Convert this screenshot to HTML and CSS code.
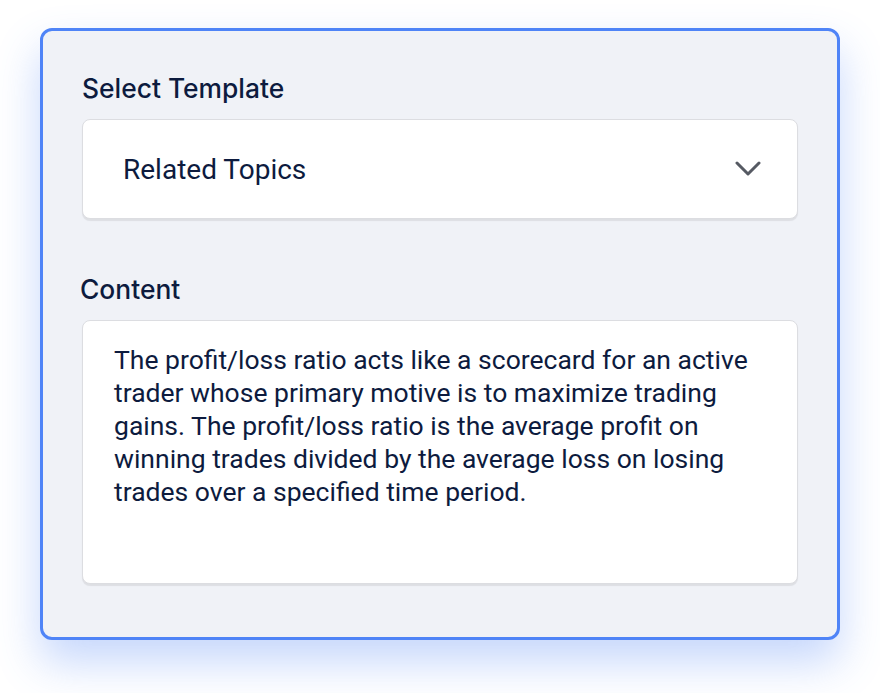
FILE: index.html
```html
<!DOCTYPE html>
<html lang="en">
<head>
    <meta charset="UTF-8">
    <meta name="viewport" content="width=device-width, initial-scale=1.0">
    <title>Select Template</title>
    <link rel="stylesheet" href="styles.css">
</head>
<body>
    <div class="card">
        <label class="field-label">Select Template</label>
        <div class="select-box">
            <span class="select-value">Related Topics</span>
            <svg class="chevron" width="26" height="16" viewBox="0 0 26 16">
                <path d="M2 2 L13 13 L24 2" fill="none" stroke="#565a63" stroke-width="3" stroke-linecap="round" stroke-linejoin="round"/>
            </svg>
        </div>

        <label class="field-label content-label">Content</label>
        <div class="text-box">
            The profit/loss ratio acts like a scorecard for an active trader whose primary motive is to maximize trading gains. The profit/loss ratio is the average profit on winning trades divided by the average loss on losing trades over a specified time period.
        </div>
    </div>
</body>
</html>
```

FILE: styles.css
```css
body{
    margin: 0;
    min-height: 693px;
    background-color: #ffffff;
    font-family: "Inter", "Roboto", sans-serif;
    color: #0d1b3e;
    padding-top: 28px;
    box-sizing: border-box;
}
.card{
    box-sizing: border-box;
    width: 800px;
    height: 612px;
    margin: 0 auto;
    padding: 42px 39px 0 39px;
    border: 3px solid #4f84f7;
    border-radius: 12px;
    background-color: #f0f2f7;
    box-shadow: 0 22px 44px rgba(79, 132, 247, 0.32);
}
.field-label{
    display: block;
    font-size: 26.4px;
    line-height: 30px;
    font-weight: 500;
    margin-bottom: 16px;
}
.content-label{
    margin-top: 55px;
    margin-left: -2px;
}
.select-box{
    box-sizing: border-box;
    height: 100px;
    display: flex;
    align-items: center;
    justify-content: space-between;
    padding: 0 36px 0 40px;
    background-color: #fff;
    border: 1px solid #dcdde1;
    border-radius: 8px;
    box-shadow: 0 2px 1px rgba(0, 0, 0, 0.08);
}
.select-value, .text-box{
    font-family: "Roboto", sans-serif;
}
.select-value{
    font-size: 28px;
}
.chevron{
    display: block;
}
.text-box{
    box-sizing: border-box;
    height: 264px;
    padding: 22px 31px;
    font-size: 26.5px;
    line-height: 33px;
    background-color: #fff;
    border: 1px solid #dcdde1;
    border-radius: 8px;
    box-shadow: 0 2px 1px rgba(0, 0, 0, 0.08);
}
```
